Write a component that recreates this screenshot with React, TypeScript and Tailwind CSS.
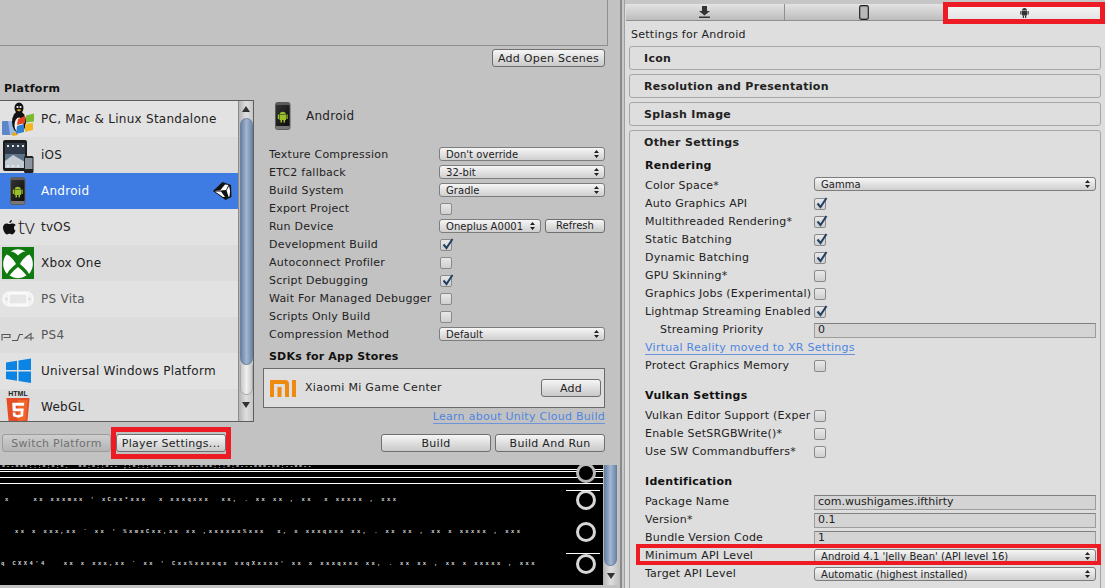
import React from "react";

const font = { fontFamily: '"DejaVu Sans", sans-serif' };

function Phone({ size = 36 }: { size?: number }) {
  return (
    <svg width={size} height={size} viewBox="0 0 36 36">
      <defs>
        <linearGradient id="ph" x1="0" y1="0" x2="1" y2="1">
          <stop offset="0" stopColor="#333" />
          <stop offset="1" stopColor="#0d0d0d" />
        </linearGradient>
      </defs>
      <rect x="10" y="4" width="15.500" height="28" rx="3" fill="#5c5c5c" />
      <rect x="11" y="7" width="13.500" height="21" rx="1" fill="url(#ph)" />
      <rect x="11" y="28" width="13.500" height="3" rx="1" fill="#777" />
      <g fill="#9cc02a">
        <path d="M14.500 16a3.500 3.500 0 0 1 6.500 0z" />
        <rect x="14.500" y="16.500" width="6.500" height="5.500" />
        <rect x="12.800" y="16.500" width="1.200" height="4.500" />
        <rect x="21.500" y="16.500" width="1.200" height="4.500" />
        <rect x="15.500" y="22" width="1.500" height="2.500" />
        <rect x="18.500" y="22" width="1.500" height="2.500" />
      </g>
    </svg>
  );
}

function PcIcon() {
  return (
    <svg width="36" height="36" viewBox="0 0 36 36">
      <rect x="2" y="20" width="13" height="14" rx="1" fill="#5d86c9" />
      <path d="M8 20h7v14H10z" fill="#9ab8e4" />
      <ellipse cx="19" cy="21" rx="7" ry="11" fill="#111" />
      <ellipse cx="19" cy="24" rx="4.500" ry="7.500" fill="#f4f4f4" />
      <ellipse cx="19" cy="7" rx="4.500" ry="5.500" fill="#111" />
      <circle cx="17.500" cy="6" r="1.100" fill="#fff" />
      <circle cx="20.500" cy="6" r="1.100" fill="#fff" />
      <path d="M16.500 9l2.500-1 2.500 1-2.500 1.500z" fill="#e8a81a" />
      <path d="M11 33l5-2 2 3-5 1z" fill="#e8a81a" />
      <path d="M18 18l7-3v7l-8 2z" fill="#e8431f" />
      <path d="M26 14.500l8-2v8l-8 1z" fill="#7cba2f" />
      <path d="M17 25l7-2v8l-8 2z" fill="#2f7fd6" />
      <path d="M25 23l8-1v7l-8 2z" fill="#f2b61f" />
    </svg>
  );
}

function IosIcon() {
  return (
    <svg width="36" height="36" viewBox="0 0 36 36">
      <rect x="3" y="3" width="24" height="31" rx="2" fill="#1c1c1c" />
      <rect x="5" y="6" width="20" height="25" fill="#5d7488" />
      <rect x="5" y="6" width="20" height="11" fill="#2f3b4b" />
      <path d="M5 24l8-6 12 7v6H5z" fill="#c2cad2" />
      <g fill="#e7e7e7">
        <rect x="7" y="8" width="2" height="2" />
        <rect x="12" y="8" width="2" height="2" />
        <rect x="17" y="8" width="2" height="2" />
        <rect x="22" y="8" width="2" height="2" />
        <rect x="7" y="28" width="2" height="2" />
        <rect x="12" y="28" width="2" height="2" />
        <rect x="17" y="28" width="2" height="2" />
      </g>
      <rect x="24" y="19" width="9.500" height="17" rx="1.500" fill="#222" />
      <rect x="25" y="21" width="7.500" height="11" fill="#8a95a1" />
    </svg>
  );
}

function TvIcon() {
  return (
    <div className="w-[36px] h-[36px] flex items-center pl-[2px] shrink-0">
      <svg width="14" height="16" viewBox="0 0 14 16">
        <path
          d="M10 1c-1.500.2-2.800 1.500-2.700 3 1.500.1 2.800-1.400 2.700-3zM7.300 5C6.300 5 5.600 4.400 4.500 4.400 2.500 4.400 1 6 1 8.600c0 3 2.200 6.900 4 6.900 1 0 1.400-.7 2.500-.7s1.400.7 2.500.7c1.500 0 3-2.500 3.500-4-1.700-.7-2.500-3.900.2-5.500-1-1.300-2.300-1.600-3.100-1.600C9.300 4.400 8.300 5 7.300 5z"
          fill="#111"
        />
      </svg>
      <span className="text-[21px] leading-none text-[#222] font-light ml-[2px] -mt-[2px]" style={{ fontFamily: '"Open Sans", sans-serif' }}>
        tv
      </span>
    </div>
  );
}

function XboxIcon() {
  return (
    <svg width="36" height="36" viewBox="0 0 36 36">
      <rect x="2" y="2" width="32" height="32" fill="#0f7a0f" />
      <g fill="#fff">
        <path d="M10.500 6.500A15 15 0 0 1 25.500 6.500C22.500 6.500 20 8.500 18 10.500C16 8.500 13.500 6.500 10.500 6.500z" />
        <path d="M6.500 9.500C10 10.500 14 15 16 19C12 22 8.500 26 7 29A15 15 0 0 1 6.500 9.500z" />
        <path d="M29.500 9.500C26 10.500 22 15 20 19C24 22 27.500 26 29 29A15 15 0 0 0 29.500 9.500z" />
        <path d="M9.500 30.500C12 27 16 23.500 18 22C20 23.500 24 27 26.500 30.500A15 15 0 0 1 9.500 30.500z" />
      </g>
    </svg>
  );
}

function VitaIcon() {
  return (
    <svg width="36" height="36" viewBox="0 0 36 36">
      <rect x="3" y="11" width="30" height="14" rx="6" fill="#f2f2f2" stroke="#fff" strokeWidth="1" />
      <rect x="9" y="13" width="18" height="10" fill="#e6e6e6" stroke="#fff" />
      <circle cx="6.500" cy="18" r="1.500" fill="#ddd" />
      <circle cx="29.500" cy="18" r="1.500" fill="#ddd" />
    </svg>
  );
}

function Ps4Icon() {
  return (
    <svg width="36" height="36" viewBox="0 0 36 36" fill="none" stroke="#555" strokeWidth="1.100">
      <path d="M2 23.500V17.500H10V20.500H3.500" />
      <path d="M12 23.500H17.500L19.500 17.500H23" />
      <path d="M31 23.500V16.500L25 21H34" />
    </svg>
  );
}

function WinIcon() {
  return (
    <svg width="36" height="36" viewBox="0 0 36 36">
      <path d="M6 9.500l11-1.700V17H6zM18.500 7.600L31 5.500V17H18.500zM6 18.500h11v9.200L6 26zM18.500 18.500H31V30l-12.500-2z" fill="#0b84e3" />
    </svg>
  );
}

function Html5Icon() {
  return (
    <div className="w-[36px] h-[36px] flex flex-col items-center -mt-[1px]">
      <span className="text-[7px] font-bold leading-[8px] text-[#222] mt-[1px]" style={{ fontFamily: '"Liberation Sans", sans-serif' }}>
        HTML
      </span>
      <svg width="26" height="28" viewBox="0 0 26 28">
        <path d="M1 0h24l-2.200 24L13 27 3.200 24z" fill="#e44d26" />
        <path d="M13 2v23l8-2.200L23 2z" fill="#f16529" />
        <path d="M7 5h12.500l-.3 3H10.500l.2 3h8.200l-.6 8-5.300 1.500L7.800 19l-.3-4h2.800l.2 2 2.500.7 2.600-.7.300-3.300H7.500z" fill="#fff" />
      </svg>
    </div>
  );
}

function UnityMark() {
  return (
    <svg width="20" height="18" viewBox="0 0 20 18">
      <path d="M10.500 0L19 3l.5 12-6 3L1 9z" fill="#111" />
      <path d="M2.500 9l6-1 4.500-5.500L16.500 3 14 8zM3 9.500l6 0 4 5.500-2 0zM14.500 8.500l2.600-4.500 1 5-.6 5.500-.8.500z" fill="#fff" />
    </svg>
  );
}

function MiIcon() {
  return (
    <svg width="26" height="17" viewBox="0 0 26 17" fill="#ef8a0e" className="shrink-0">
      <path d="M0 0h15a4 4 0 0 1 4 4v13h-4V5a1 1 0 0 0-1-1H4v13H0z" />
      <rect x="7.500" y="7" width="4" height="10" />
      <rect x="22" y="0" width="4" height="17" />
    </svg>
  );
}

function Updown() {
  return (
    <svg width="5" height="8" viewBox="0 0 5 8" className="shrink-0">
      <path d="M2.500 0L5 3H0zM2.500 8L0 5h5z" fill="#222" />
    </svg>
  );
}

function Select({ text, className = "" }: { text: string; className?: string }) {
  return (
    <div
      className={`h-[14px] flex items-center justify-between pl-[6px] pr-[5px] rounded-[3px] border border-[#7d7d7d] bg-gradient-to-b from-[#f6f6f6] to-[#cfcfcf] text-[10px] text-[#222] tracking-[0.05px] overflow-hidden whitespace-nowrap ${className}`}
    >
      <span className="pt-[1px]">{text}</span>
      <Updown />
    </div>
  );
}

function Check({ on = false }: { on?: boolean }) {
  return (
    <div className="relative w-[12px] h-[12px] ml-[1px] rounded-[2px] border border-[#8a8a8a] bg-gradient-to-b from-[#e8e8e8] to-[#cfcfcf] shrink-0">
      {on && (
        <svg width="14" height="14" viewBox="0 0 14 14" className="absolute -top-[3px] left-0">
          <path d="M2.500 7.500l3 3.500 6-9" fill="none" stroke="#233f62" strokeWidth="2" />
        </svg>
      )}
    </div>
  );
}

function Btn({ text, className = "", disabled = false }: { text: string; className?: string; disabled?: boolean }) {
  return (
    <div
      className={`flex items-center justify-center pt-[2px] rounded-[3px] border bg-gradient-to-b text-[11px] tracking-[0.28px] whitespace-nowrap ${
        disabled
          ? "border-[#9c9c9c] from-[#cfcfcf] to-[#b4b4b4] text-[#707070]"
          : "border-[#6f6f6f] from-[#f6f6f6] to-[#c9c9c9] text-[#222]"
      } ${className}`}
    >
      {text}
    </div>
  );
}

function Row({ label, children, labelW }: { label: string; children?: React.ReactNode; labelW: string }) {
  return (
    <div className="flex items-center h-[18px] shrink-0 text-[11px] tracking-[0.22px] text-[#222]">
      <div className={`${labelW} overflow-hidden whitespace-nowrap shrink-0`}>{label}</div>
      {children}
    </div>
  );
}

const platforms: { name: string; icon: React.ReactNode; sel?: boolean; dim?: boolean; bg: string }[] = [
  { name: "PC, Mac & Linux Standalone", icon: <PcIcon />, bg: "bg-[#e2e2e2]" },
  { name: "iOS", icon: <IosIcon />, bg: "bg-[#dcdcdc]" },
  { name: "Android", icon: <Phone />, sel: true, bg: "bg-[#3e7ce4]" },
  { name: "tvOS", icon: <TvIcon />, bg: "bg-[#e2e2e2]" },
  { name: "Xbox One", icon: <XboxIcon />, bg: "bg-[#dcdcdc]" },
  { name: "PS Vita", icon: <VitaIcon />, dim: true, bg: "bg-[#e2e2e2]" },
  { name: "PS4", icon: <Ps4Icon />, dim: true, bg: "bg-[#dcdcdc]" },
  { name: "Universal Windows Platform", icon: <WinIcon />, bg: "bg-[#e2e2e2]" },
  { name: "WebGL", icon: <Html5Icon />, bg: "bg-[#dcdcdc]" },
];

function PlatformList() {
  return (
    <div className="w-[254px] h-[322px] flex border-t border-b border-r border-[#5e5e5e] shrink-0">
      <div className="flex-1 h-full overflow-hidden">
        {platforms.map((p) => (
          <div key={p.name} className={`h-[36px] flex items-center ${p.bg}`}>
            <div className="w-[36px] h-[36px] shrink-0 flex items-center">{p.icon}</div>
            <span
              className={`ml-[5px] text-[12px] tracking-[0.27px] flex-1 ${
                p.sel ? "text-white" : p.dim ? "text-[#555]" : "text-[#222]"
              }`}
            >
              {p.name}
            </span>
            {p.sel && (
              <div className="mr-[6px] flex items-center">
                <UnityMark />
              </div>
            )}
          </div>
        ))}
      </div>
      <div className="w-[15px] h-full border-l border-[#8c8c8c] bg-gradient-to-r from-[#b4b4b4] via-[#dedede] to-[#c6c6c6] flex flex-col items-center">
        <svg width="8" height="6" viewBox="0 0 8 6" className="mt-[5px] shrink-0">
          <path d="M4 0l4 6H0z" fill="#333" />
        </svg>
        <div className="mt-[6px] w-[13px] h-[247px] rounded-[7px] border border-[#6a7f9c] bg-gradient-to-r from-[#6b83a6] via-[#a3b6d1] to-[#6f88ab] shrink-0" />
        <div className="w-[13px] h-[30px] rounded-b-[7px] bg-gradient-to-r from-[#c8c8c8] via-[#f0f0f0] to-[#c8c8c8] border border-t-0 border-[#a8a8a8] shrink-0" />
        <svg width="8" height="6" viewBox="0 0 8 6" className="mt-[7px] shrink-0">
          <path d="M4 6L0 0h8z" fill="#333" />
        </svg>
      </div>
    </div>
  );
}

function AndroidPanel() {
  const w = "w-[170px]";
  const up = "flex-1 -mt-[3px]";
  return (
    <div className="w-[336px] ml-[15px] flex flex-col">
      <div className="flex items-center h-[36px] -ml-[4px] -mt-[2px] shrink-0">
        <Phone />
        <span className="text-[12px] text-[#222] tracking-[0.27px] ml-[5px]">Android</span>
      </div>
      <div className="h-[12px] shrink-0" />
      <Row label="Texture Compression" labelW={w}><Select text="Don't override" className={up} /></Row>
      <Row label="ETC2 fallback" labelW={w}><Select text="32-bit" className={up} /></Row>
      <Row label="Build System" labelW={w}><Select text="Gradle" className={up} /></Row>
      <Row label="Export Project" labelW={w}><Check /></Row>
      <Row label="Run Device" labelW={w}>
        <Select text="Oneplus A0001" className="w-[102px] mr-[4px] -mt-[3px]" />
        <Btn text="Refresh" className="flex-1 h-[14px] !text-[10px] !tracking-[0px] !pt-0 -mt-[3px]" />
      </Row>
      <Row label="Development Build" labelW={w}><Check on /></Row>
      <Row label="Autoconnect Profiler" labelW={w}><Check /></Row>
      <Row label="Script Debugging" labelW={w}><Check on /></Row>
      <Row label="Wait For Managed Debugger" labelW={w}><Check /></Row>
      <Row label="Scripts Only Build" labelW={w}><Check /></Row>
      <Row label="Compression Method" labelW={w}><Select text="Default" className={up} /></Row>
      <div className="h-[24px] shrink-0 flex items-center pt-[2px] text-[11px] font-bold tracking-[0.2px] text-[#111]">SDKs for App Stores</div>
      <div className="-ml-[6px] w-[342px] h-[40px] shrink-0 border border-[#6a6a6a] bg-[#dedede] flex items-center pl-[6px] pr-[3px]">
        <MiIcon />
        <span className="ml-[9px] pt-[1px] flex-1 text-[11px] tracking-[0.3px] text-[#222]">Xiaomi Mi Game Center</span>
        <Btn text="Add" className="w-[60px] h-[18px]" />
      </div>
      <div className="flex justify-end h-[18px] shrink-0 items-center text-[11px] text-[#4f86e0] tracking-[0.27px]">
        <span className="border-b border-[#6d94d8] leading-[13px]">Learn about Unity Cloud Build</span>
      </div>
    </div>
  );
}

function NoiseLine({ text, pl }: { text: string; pl: string }) {
  return (
    <div className="flex h-[32px] items-center">
      <div
        className={`flex-1 ${pl} text-[5.500px] font-bold text-[#dddddd] whitespace-pre tracking-[2.400px] overflow-hidden`}
        style={{ fontFamily: '"Liberation Mono", monospace' }}
      >
        {text}
      </div>
      <div className="w-[34px] flex justify-center shrink-0">
        <div className="w-[20px] h-[20px] rounded-full border-[3px] border-[#d8d8d8] bg-black" />
      </div>
    </div>
  );
}

function Console() {
  return (
    <div className="h-[120px] mt-[13px] w-[618px] flex shrink-0">
      <div className="flex-1 bg-black overflow-hidden flex flex-col relative">
        <div className="h-[19px] flex flex-col shrink-0">
          <div
            className="h-[4px] text-[5px] leading-[4px] text-white font-bold whitespace-pre tracking-[1.500px] px-[2px] overflow-hidden"
            style={{ fontFamily: '"Liberation Mono", monospace' }}
          >
            {"=--===:::=:=:=.  ==:=::=-- ;:=:::===---===--===:::=:=---===-==:--==--"}
          </div>
          <div className="w-full h-[1px] bg-white" />
          <div className="mt-[1px] w-full h-[1px] bg-white" />
          <div className="mt-[5px] w-full h-[1px] bg-white" />
          <div className="mt-[5px] w-full h-[1px] bg-white" />
        </div>
        <div className="flex-1 flex flex-col">
          <NoiseLine pl="pl-[5px]" text={"x    xx xxxmxx ' xCxx*xxx  x xxxqxxx  xx, . xx xx , xx  x xxxxx , xxx"} />
          <NoiseLine pl="pl-[15px]" text={"xx x xxx,xx ` xx ' %xmxCxx,xx xx ,xxxxxx%xxx  x, x xxxqxxx xx, . xx xx , xx x xxxxx , xxx"} />
          <NoiseLine pl="pl-[1px]" text={"q CXX4'4   xx x xxx,xx ` xx ' Cxx%xxxxqx xxqXxxxx' xx x xxxqxxx xx, . xx xx , xx x xxxxx , xxx"} />
        </div>
        <div className="absolute right-[7px] top-[-2px] w-[20px] h-[20px] rounded-full border-[3px] border-[#b8b8b8] bg-black" />
        <div className="absolute right-[3px] top-[25px] w-[34px] h-[1px] bg-white" />
        <div className="absolute right-[3px] top-[88px] w-[34px] h-[1px] bg-white" />
      </div>
      <div className="w-[15px] bg-gradient-to-r from-[#b4b4b4] via-[#dedede] to-[#c6c6c6] flex flex-col items-center">
        <div className="w-[13px] h-[101px] rounded-b-[7px] border border-t-0 border-[#6a7f9c] bg-gradient-to-r from-[#6b83a6] via-[#a3b6d1] to-[#6f88ab]" />
        <svg width="8" height="6" viewBox="0 0 8 6" className="mt-[7px]">
          <path d="M4 6L0 0h8z" fill="#333" />
        </svg>
      </div>
    </div>
  );
}

function LeftPanel() {
  return (
    <div className="w-[620px] h-full bg-[#c2c2c2] flex flex-col shrink-0">
      <div className="w-[608px] h-[46px] border-b border-r border-[#8f8f8f] shrink-0" />
      <div className="w-[605px] flex justify-end pt-[3px] shrink-0">
        <Btn text="Add Open Scenes" className="w-[113px] h-[18px]" />
      </div>
      <div className="h-[33px] flex items-end pl-[4px] pb-[4px] text-[11px] font-bold tracking-[0.3px] text-[#111] shrink-0">
        <span className="leading-[14px]">Platform</span>
      </div>
      <div className="flex h-[322px] shrink-0">
        <PlatformList />
        <AndroidPanel />
      </div>
      <div className="relative flex items-center w-[605px] h-[18px] mt-[12px] shrink-0 pl-[2px]">
        <Btn text="Switch Platform" disabled className="w-[109px] h-[18px]" />
        <Btn text="Player Settings..." className="w-[110px] h-[18px] ml-[5px]" />
        <div className="flex-1" />
        <Btn text="Build" className="w-[110px] h-[18px]" />
        <Btn text="Build And Run" className="w-[110px] h-[18px] ml-[4px]" />
        <div className="absolute left-[111px] top-[-7px] w-[120px] h-[32px] border-[5px] border-[#ed1c24]" />
      </div>
      <Console />
    </div>
  );
}

function Foldout({ text }: { text: string }) {
  return (
    <div className="h-[24px] mb-[4px] pt-[2px] rounded-[3px] border border-[#a6a6a6] flex items-center pl-[14px] text-[11px] font-bold tracking-[0.3px] text-[#222]">
      {text}
    </div>
  );
}

function Input({ text }: { text: string }) {
  return (
    <div className="flex-1 h-[15px] border border-[#9c9c9c] border-t-[#808080] bg-[#d4d4d4] pl-[3px] flex items-center text-[11px] text-[#222] tracking-[0px] overflow-hidden whitespace-nowrap">
      {text}
    </div>
  );
}

function Heading({ text, h }: { text: string; h: string }) {
  return <div className={`${h} flex items-end text-[11px] font-bold tracking-[0.3px] text-[#111] pb-[3px]`}>{text}</div>;
}

function RightPanel() {
  const w = "w-[169px]";
  const c = "w-[168px]";
  return (
    <div className="flex-1 h-full bg-[#dedede] flex flex-col overflow-hidden relative">
      <div className="h-[4px] bg-[#c6c6c6] shrink-0" />
      <div className="h-[17px] ml-[1px] flex border-b border-[#8f8f8f] shrink-0">
        <div className="w-[159px] pr-[2px] flex items-center justify-center bg-gradient-to-b from-[#e4e4e4] to-[#bdbdbd] border-r border-[#8f8f8f]">
          <svg width="11" height="12" viewBox="0 0 11 12">
            <path d="M3 0h5v5h3L5.500 9.500 0 5h3zM0 10.500h11V12H0z" fill="#333" />
          </svg>
        </div>
        <div className="w-[160px] pr-[2px] flex items-center justify-center bg-gradient-to-b from-[#e4e4e4] to-[#bdbdbd] border-r border-[#8f8f8f]">
          <svg width="10" height="15" viewBox="0 0 10 15">
            <rect x="0.700" y="0.700" width="8.600" height="13.600" rx="1.500" fill="#aaa" stroke="#222" strokeWidth="1.200" />
            <rect x="1.800" y="2.200" width="6.400" height="10" fill="#b8b8b8" />
          </svg>
        </div>
        <div className="flex-1 pr-[2px] flex items-center justify-center bg-gradient-to-b from-[#f8f8f8] to-[#e2e2e2]">
          <svg width="9" height="11" viewBox="0 0 9 11" fill="#333">
            <path d="M2 3.500a2.500 2.500 0 0 1 5 0z" />
            <rect x="2" y="4" width="5" height="4.500" />
            <rect x="0.300" y="4" width="1.200" height="3.500" />
            <rect x="7.500" y="4" width="1.200" height="3.500" />
            <rect x="2.800" y="8.500" width="1.200" height="2.500" />
            <rect x="5" y="8.500" width="1.200" height="2.500" />
          </svg>
        </div>
      </div>
      <div className="h-[25px] pl-[6px] pt-[4px] flex items-center text-[11px] tracking-[0.25px] text-[#222] shrink-0">Settings for Android</div>
      <div className="px-[4px] w-[480px] shrink-0">
        <Foldout text="Icon" />
        <Foldout text="Resolution and Presentation" />
        <Foldout text="Splash Image" />
        <div className="rounded-t-[3px] border border-[#a6a6a6] pl-[15px] pr-[4px] pb-[20px] h-[480px]">
          <div className="h-[22px] pt-[2px] -ml-[1px] flex items-center text-[11px] font-bold tracking-[0.3px] text-[#222]">Other Settings</div>
          <div className="h-[24px] flex items-end pb-[3px] text-[11px] font-bold tracking-[0.3px] text-[#111]">Rendering</div>
          <Row label="Color Space*" labelW={w}><Select text="Gamma" className="flex-1 -mt-[4px]" /></Row>
          <Row label="Auto Graphics API" labelW={c}><Check on /></Row>
          <Row label="Multithreaded Rendering*" labelW={c}><Check on /></Row>
          <Row label="Static Batching" labelW={c}><Check on /></Row>
          <Row label="Dynamic Batching" labelW={c}><Check on /></Row>
          <Row label="GPU Skinning*" labelW={c}><Check /></Row>
          <Row label="Graphics Jobs (Experimental)" labelW={c}><Check /></Row>
          <Row label="Lightmap Streaming Enabled" labelW={c}><Check on /></Row>
          <div className="flex items-center h-[18px] text-[11px] tracking-[0.22px] text-[#222]">
            <div className="w-[169px] pl-[15px]">Streaming Priority</div>
            <Input text="0" />
          </div>
          <div className="h-[18px] flex items-center text-[11px] text-[#4f86e0] tracking-[0.27px]">
            <span className="border-b border-[#6d94d8] leading-[13px]">Virtual Reality moved to XR Settings</span>
          </div>
          <Row label="Protect Graphics Memory" labelW={c}><Check /></Row>
          <Heading h="h-[32px]" text="Vulkan Settings" />
          <Row label="Vulkan Editor Support (Exper" labelW={c}><Check /></Row>
          <Row label="Enable SetSRGBWrite()*" labelW={c}><Check /></Row>
          <Row label="Use SW Commandbuffers*" labelW={c}><Check /></Row>
          <Heading h="h-[32px]" text="Identification" />
          <Row label="Package Name" labelW={w}><Input text="com.wushigames.ifthirty" /></Row>
          <Row label="Version*" labelW={w}><Input text="0.1" /></Row>
          <Row label="Bundle Version Code" labelW={w}><Input text="1" /></Row>
          <Row label="Minimum API Level" labelW={w}><Select text="Android 4.1 'Jelly Bean' (API level 16)" className="flex-1" /></Row>
          <Row label="Target API Level" labelW={w}><Select text="Automatic (highest installed)" className="flex-1" /></Row>
        </div>
      </div>
      <div className="absolute left-[318px] top-[2px] w-[162px] h-[22px] border-[5px] border-[#ed1c24]" />
      <div className="absolute left-[11px] top-[544px] w-[465px] h-[21px] border-[4px] border-[#ed1c24]" />
    </div>
  );
}

export default function App() {
  return (
    <div className="w-[1105px] h-[588px] flex overflow-hidden" style={font}>
      <LeftPanel />
      <div className="w-[2px] h-full bg-[#8a8a8a] shrink-0" />
      <div className="w-[2px] h-full bg-[#c8c8c8] shrink-0" />
      <div className="w-[1px] h-full bg-[#a0a0a0] shrink-0" />
      <RightPanel />
    </div>
  );
}
